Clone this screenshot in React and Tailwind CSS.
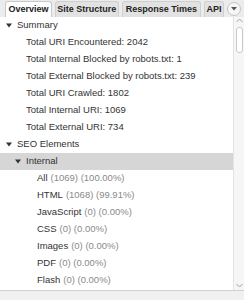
import React from 'react'

const Tri = ({ className = '' }) => (
  <svg width="6" height="5" viewBox="0 0 6 5" className={className}>
    <path d="M0 0.5 L6 0.5 L3 4.5 Z" fill="#333" />
  </svg>
)

const tabs = [
  ['Overview', 'w-[47px]'],
  ['Site Structure', 'w-[64px]'],
  ['Response Times', 'w-[80px]'],
  ['API', 'w-[20px]'],
]

const summary = [
  'Total URI Encountered: 2042',
  'Total Internal Blocked by robots.txt: 1',
  'Total External Blocked by robots.txt: 239',
  'Total URI Crawled: 1802',
  'Total Internal URI: 1069',
  'Total External URI: 734',
]

const internal = [
  ['All', '(1069) (100.00%)'],
  ['HTML', '(1068) (99.91%)'],
  ['JavaScript', '(0) (0.00%)'],
  ['CSS', '(0) (0.00%)'],
  ['Images', '(0) (0.00%)'],
  ['PDF', '(0) (0.00%)'],
  ['Flash', '(0) (0.00%)'],
]

const App = () => {
  return (
    <div
      className="w-[244px] h-[300px] bg-[#ececec] flex flex-col overflow-hidden"
      style={{ fontFamily: '"Liberation Sans", Arial, sans-serif' }}
    >
      {/* tabs */}
      <div className="h-[17px] flex items-end pl-[5px] gap-[3px] shrink-0">
        {tabs.map(([t, w], i) => (
          <div
            key={t}
            className={
              'h-[16px] flex items-center justify-center whitespace-nowrap text-[9px] font-bold text-[#222] border border-b-0 rounded-t-[3px] ' +
              w +
              (i === 0 ? ' bg-white border-[#c9c9c9]' : ' bg-[#e2e2e2] border-[#cfcfcf]')
            }
          >
            {t}
          </div>
        ))}
        <div className="ml-auto mr-[3px] mb-[1px] w-[14px] h-[14px] rounded-full border border-[#c4c4c4] bg-[#f6f6f6] flex items-center justify-center">
          <svg width="6" height="4" viewBox="0 0 6 4">
            <path d="M0 0 L6 0 L3 3.5 Z" fill="#555" />
          </svg>
        </div>
      </div>

      {/* content */}
      <div className="h-[273px] flex bg-white shrink-0">
        <div className="flex-1 text-[9.5px] text-[#333]">
          <div className="h-[17px] flex items-center pl-[6px]">
            <Tri className="mr-[5px]" />
            <span>Summary</span>
          </div>
          {summary.map((s) => (
            <div key={s} className="h-[17px] flex items-center pl-[26px] whitespace-nowrap">
              {s}
            </div>
          ))}
          <div className="h-[17px] flex items-center pl-[6px]">
            <Tri className="mr-[5px]" />
            <span>SEO Elements</span>
          </div>
          <div className="h-[17px] flex items-center pl-[15px] bg-[#d6d6d6]">
            <Tri className="mr-[5px]" />
            <span>Internal</span>
          </div>
          {internal.map(([a, b]) => (
            <div key={a} className="h-[17px] flex items-center pl-[37px] whitespace-nowrap">
              <span>{a}</span>
              <span className="ml-[3px] text-[#8a8a8a]">{b}</span>
            </div>
          ))}
        </div>

        {/* scrollbar */}
        <div className="w-[11px] bg-[#f6f6f6] border-l border-[#e3e3e3] flex flex-col items-center">
          <svg width="7" height="5" viewBox="0 0 7 5" className="mt-[1px]">
            <path d="M0.5 4 L3.5 1 L6.5 4" stroke="#a0a0a0" fill="none" strokeWidth="1" />
          </svg>
          <div className="mt-[4px] w-[7px] h-[26px] rounded-[3px] bg-white border border-[#c8c8c8]" />
          <div className="flex-1" />
          <svg width="7" height="5" viewBox="0 0 7 5" className="mb-[2px]">
            <path d="M0.5 1 L3.5 4 L6.5 1" stroke="#a0a0a0" fill="none" strokeWidth="1" />
          </svg>
        </div>
      </div>

      {/* bottom */}
      <div className="flex-1 border-t border-[#cfcfcf] bg-[#f0f0f0]" />
    </div>
  )
}

export default App
